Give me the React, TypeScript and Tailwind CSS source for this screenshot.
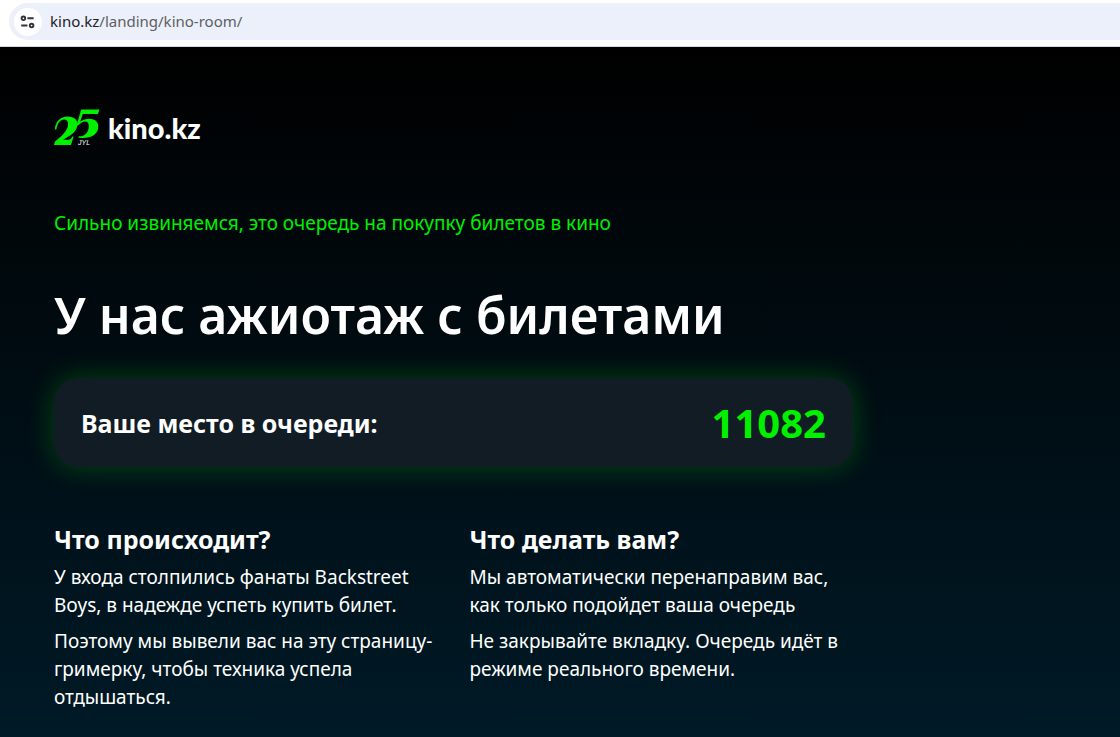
import type { ReactNode } from 'react';

function SiteSettingsIcon() {
  return (
    <svg viewBox="0 0 16 16" className="size-4" fill="none" stroke="#303236" strokeWidth="1.9" aria-hidden="true">
      <circle cx="3.4" cy="4.3" r="1.8" />
      <path d="M7.400 4.300H13.600M1.200 11.500h6.200" />
      <circle cx="11.600" cy="11.500" r="1.8" />
    </svg>
  );
}

function AnniversaryMark() {
  return (
    <svg viewBox="0 0 46 37" className="h-[37px] w-[46px]" fill="#00f000" aria-hidden="true">
      <path d="M0.800 20.500C1.400 12.500 6.500 7.600 13.500 7.600C20.500 7.600 24.300 11.200 23.400 16.500C22.600 22 18 25.500 12.500 28.700L9 30.800H14C16.500 30.800 17.500 29.500 18.200 27.500H19.600L17 36H0L1 32.500C6 28.500 11.800 23.500 13.500 18.200C14.900 13.700 13.500 10.400 10.200 10.400C6.300 10.400 3.200 14.400 2.400 20.500Z" />
      <path d="M27.200 0.500H45.400L44 5H28.800L26.200 12.600C28.800 10.700 32 9.700 35.500 9.700C41.500 9.700 45.200 13.600 44.200 19.300C42.900 26.500 35.500 30.200 24.500 28.700L24.800 27.300C29.800 27.700 33.300 24.800 34.500 20C35.500 15.600 34.300 12.400 31.200 12.400C28.700 12.400 26.500 13.700 24.500 16.200H22.600Z" />
    </svg>
  );
}

function Column({ title, children }: { title: string; children: ReactNode }) {
  return (
    <section className="flex flex-col gap-2 text-[19px] leading-7">
      <h2 className="text-[25px] leading-8 font-bold">{title}</h2>
      {children}
    </section>
  );
}

export default function App() {
  return (
    <div className="flex min-h-screen flex-col bg-white font-['Noto_Sans',sans-serif]">
      <header className="border-b border-[#d5d8dc] pt-[3px] pb-1.5 pl-[9px]">
        <div className="flex h-[37px] items-center gap-2 rounded-l-full bg-[#ecf0fa] pl-[5px]">
          <button type="button" aria-label="Сведения о сайте" className="flex size-7 items-center justify-center rounded-full bg-white">
            <SiteSettingsIcon />
          </button>
          <a href="#" className="text-[15px] text-[#5b5f64]">
            <span className="text-[#202226]">kino.kz</span>/landing/kino-room/
          </a>
        </div>
      </header>

      <main className="grow bg-linear-to-b/srgb from-black to-[#001a27] px-[54px] pt-[62px] pb-7 text-white">
        <div className="max-w-[799px]">
          <a href="#" aria-label="kino.kz" className="flex w-fit items-center gap-2">
            <span className="relative">
              <AnniversaryMark />
              <span className="absolute bottom-0 left-6 font-['Liberation_Sans',sans-serif] text-[7px] leading-[6px] italic">JYL</span>
            </span>
            <span className="[font-family:Lato,sans-serif] text-[29px] leading-9 font-black">kino.kz</span>
          </a>

          <p className="mt-[63px] text-[19px] leading-7 text-[#00f000]">
            Сильно извиняемся, это очередь на покупку билетов в кино
          </p>
          <h1 className="mt-[43px] text-[50px] leading-[70px] font-semibold">У нас ажиотаж с билетами</h1>

          <div className="mt-7 flex items-center justify-between rounded-3xl bg-[#111c24] px-[27px] py-4 shadow-[0_0_28px_rgba(0,240,0,0.26)]">
            <span className="text-[25px] leading-8 font-bold">Ваше место в очереди:</span>
            <output className="text-[40px] leading-[57px] font-bold text-[#00f000]">11082</output>
          </div>

          <div className="mt-14 grid grid-cols-2 gap-8">
            <Column title="Что происходит?">
              <p>У входа столпились фанаты Backstreet Boys, в надежде успеть купить билет.</p>
              <p>Поэтому мы вывели вас на эту страницу-гримерку, чтобы техника успела отдышаться.</p>
            </Column>
            <Column title="Что делать вам?">
              <p>Мы автоматически перенаправим вас, как только подойдет ваша очередь</p>
              <p>Не закрывайте вкладку. Очередь идёт в режиме реального времени.</p>
            </Column>
          </div>
        </div>
      </main>
    </div>
  );
}
